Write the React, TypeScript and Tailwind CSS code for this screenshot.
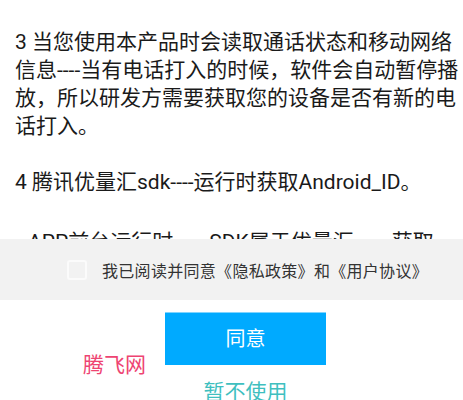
import React from "react";

export default function App() {
  const lines = [
    "3 当您使用本产品时会读取通话状态和移动网络",
    "信息----当有电话打入的时候，软件会自动暂停播",
    "放，所以研发方需要获取您的设备是否有新的电",
    "话打入。",
    "\u00a0",
    "4 腾讯优量汇sdk----运行时获取Android_ID。",
    "\u00a0",
  ];
  return (
    <div
      className="relative w-[463px] h-[400px] overflow-hidden bg-white"
      style={{ fontFamily: 'Roboto, "Noto Sans CJK SC", sans-serif' }}
    >
      <div className="h-[239px] overflow-hidden pt-[28px] pl-[15px] text-[21px] leading-[28px] text-[#1a1a1a]">
        {lines.map((l, i) => (
          <div key={i} className="whitespace-nowrap">
            {l}
          </div>
        ))}
        <div className="whitespace-nowrap pl-[13px] flex mt-[4px]">
          <span>APP前台运行时</span>
          <span className="w-[36px] text-center">----</span>
          <span>SDK属于优量汇</span>
          <span className="w-[38px] text-center">----</span>
          <span>获取</span>
        </div>
      </div>
      <div className="h-[61px] bg-[#f2f2f2] flex items-center pl-[67px]">
        <div className="w-[20px] h-[20px] rounded-[3px] border-2 border-[#fbfbfb] bg-[#f2f2f2]" />
        <span
          className="ml-[15px] text-[16px] text-[#333333] whitespace-nowrap tracking-[0.3px]"
          style={{ fontFamily: '"Noto Sans CJK SC", sans-serif' }}
        >
          我已阅读并同意《隐私政策》和《用户协议》
        </span>
      </div>
      <div className="flex flex-col items-start pl-[165px] pt-[12px]">
        <button className="w-[161px] h-[53px] bg-[#00aaff] border-t border-[#7fd4ff] text-white text-[20px] flex items-center justify-center">
          同意
        </button>
        <div className="mt-[13px] w-[161px] text-center text-[21px] text-[#3fbfbf] leading-[28px]">
          暂不使用
        </div>
      </div>
      <div className="absolute left-[83px] top-[351px] text-[21px] text-[#ee4472] leading-[28px]">
        腾飞网
      </div>
    </div>
  );
}
